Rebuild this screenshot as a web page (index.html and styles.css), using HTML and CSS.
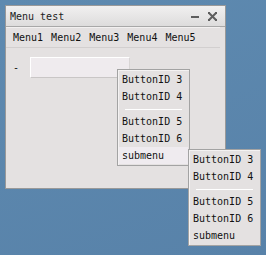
FILE: index.html
```html
<!DOCTYPE html>
<html lang="en">
<head>
<meta charset="UTF-8" />
<title>Menu test</title>
<link rel="stylesheet" href="styles.css">
</head>
<body>
<div class="window">
  <div class="titlebar">
    <span class="title">Menu test</span>
    <span class="controls">
      <svg class="btn-min" width="8" height="8" viewBox="0 0 8 8"><rect x="0" y="3" width="8" height="2" fill="#5e5e5e"/></svg>
      <svg class="btn-close" width="9" height="9" viewBox="0 0 9 9"><path d="M1 1 L8 8 M8 1 L1 8" stroke="#5e5e5e" stroke-width="2"/><rect x="0" y="0" width="2" height="2" fill="#5e5e5e"/><rect x="7" y="0" width="2" height="2" fill="#5e5e5e"/><rect x="0" y="7" width="2" height="2" fill="#5e5e5e"/><rect x="7" y="7" width="2" height="2" fill="#5e5e5e"/></svg>
    </span>
  </div>
  <div class="menubar">
    <span class="menu">Menu1</span>
    <span class="menu">Menu2</span>
    <span class="menu">Menu3</span>
    <span class="menu">Menu4</span>
    <span class="menu">Menu5</span>
  </div>
  <div class="content">
    <span class="label">-</span>
    <div class="field"></div>
  </div>
</div>

<div class="popup popup-main">
  <div class="item">ButtonID 3</div>
  <div class="item">ButtonID 4</div>
  <div class="sep"></div>
  <div class="item">ButtonID 5</div>
  <div class="item">ButtonID 6</div>
  <div class="item active">submenu</div>
</div>

<div class="popup popup-sub">
  <div class="item">ButtonID 3</div>
  <div class="item">ButtonID 4</div>
  <div class="sep"></div>
  <div class="item">ButtonID 5</div>
  <div class="item">ButtonID 6</div>
  <div class="item">submenu</div>
</div>
</body>
</html>
```

FILE: styles.css
```css
* {
  box-sizing: border-box;
}
body {
  margin: 0;
  width: 266px;
  height: 255px;
  background: linear-gradient(160deg, #5e8ab0, #5882a9);
  font-family: 'DejaVu Sans Mono', 'Liberation Mono', monospace;
  font-size: 10px;
  color: #111;
  overflow: hidden;
}
.window {
  position: absolute;
  left: 5px;
  top: 5px;
  width: 221px;
  height: 184px;
  background: #e4e1e1;
  border: 1px solid #999;
}
.titlebar {
  height: 21px;
  display: flex;
  align-items: center;
  justify-content: space-between;
  padding: 0 8px 0 4px;
  background: linear-gradient(#f1f0f0, #dddcdc);
  border-bottom: 1px solid #a8a8a8;
}
.title {
  color: #222;
}
.controls {
  display: flex;
  align-items: center;
  gap: 9px;
}
.btn-min {
  margin-top: 2px;
}
.menubar {
  display: flex;
  height: 21px;
  align-items: center;
  padding-left: 3px;
  margin-right: 5px;
  border-top: 1px solid #f2f0f0;
  border-bottom: 1px solid #d2cfcf;
}
.menu {
  padding: 0 4px;
}
.content {
  display: flex;
  align-items: center;
  padding: 9px 0 0 7px;
}
.label {
  width: 17px;
}
.field {
  width: 100px;
  height: 21px;
  background: #efebee;
  border-top: 1px solid #fff;
  border-left: 1px solid #fff;
  border-bottom: 1px solid #c9c6c6;
  border-right: 1px solid #d8d5d5;
}
.popup {
  position: absolute;
  width: 73px;
  background: #e4e1e1;
  border: 1px solid #a3a3a3;
  box-shadow: inset 1px 1px 0 #f4f2f2;
  padding: 1px;
}
.popup-main {
  left: 117px;
  top: 69px;
}
.popup-sub {
  left: 188px;
  top: 149px;
}
.item {
  height: 17px;
  line-height: 17px;
  padding-left: 3px;
  white-space: nowrap;
}
.item.active {
  background: #efebef;
}
.sep {
  height: 8px;
  margin: 0 6px;
  display: flex;
  align-items: center;
}
.sep::after {
  content: '';
  flex: 1;
  height: 1px;
  background: #fff;
}
```
